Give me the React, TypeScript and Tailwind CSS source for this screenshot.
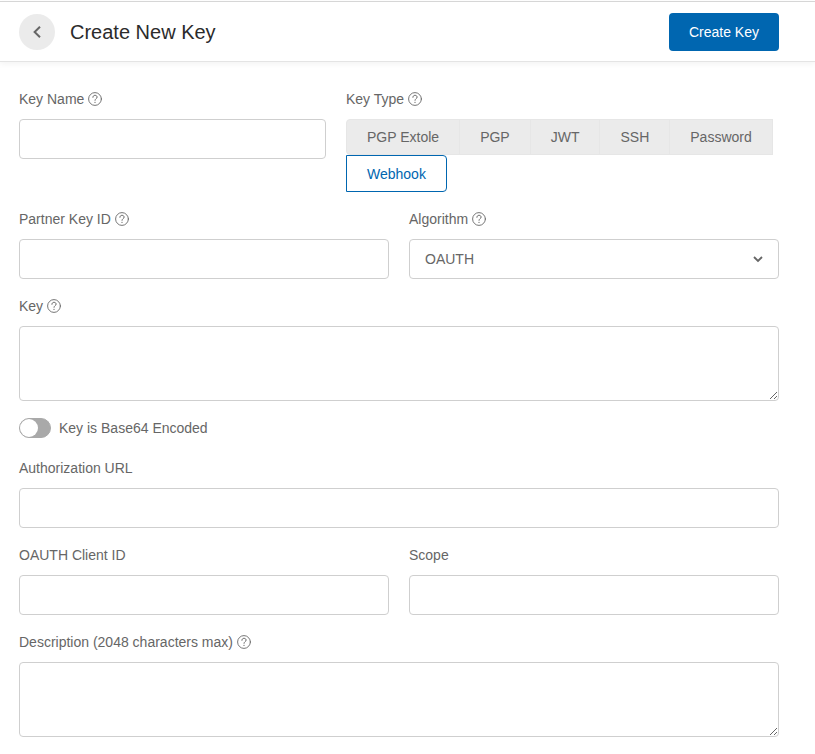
import { useState } from 'react'
import type { ReactNode } from 'react'

const keyTypes = ['PGP Extole', 'PGP', 'JWT', 'SSH', 'Password', 'Webhook']

const controlStyles =
  'block w-full rounded border border-[#cfcfcf] bg-white px-[15px] text-sm text-[#666] outline-none focus:border-[#0066b0]'

function HelpIcon() {
  return (
    <svg
      viewBox="0 0 14 14"
      className="h-3.5 w-3.5 shrink-0"
      fill="none"
      stroke="currentColor"
      strokeLinecap="round"
      aria-hidden="true"
    >
      <circle cx="7" cy="7" r="6.4" strokeWidth="0.9" />
      <path d="M4.9 5.3c0-1.2.9-2 2.1-2s2.1.8 2.1 1.8c0 1.5-2.1 1.6-2.1 3.2" strokeWidth="1" />
      <circle cx="7" cy="10.3" r="0.65" fill="currentColor" stroke="none" />
    </svg>
  )
}

type FieldProps = {
  id: string
  label: string
  help?: boolean
  children: ReactNode
}

function Field({ id, label, help, children }: FieldProps) {
  return (
    <div className="min-w-0">
      <label htmlFor={id} className="mb-2.5 flex items-center gap-1 leading-5">
        {label}
        {help && <HelpIcon />}
      </label>
      {children}
    </div>
  )
}

export default function App() {
  const [keyType, setKeyType] = useState('Webhook')
  const [encoded, setEncoded] = useState(false)

  return (
    <div className="bg-white pt-px font-['Liberation_Sans',Arial,sans-serif] text-sm text-[#666]">
      <header className="flex items-center border-t border-b border-t-[#d6d6d6] border-b-[#e4e4e4] pt-[11px] pr-9 pb-2.5 pl-[19px] shadow-[0_2px_6px_rgba(0,0,0,0.05)]">
        <button
          type="button"
          aria-label="Back"
          className="flex h-9 w-9 items-center justify-center rounded-full bg-[#ebebeb]"
        >
          <svg viewBox="0 0 12 14" className="h-3.5 w-3" fill="none" stroke="currentColor" strokeWidth="2" aria-hidden="true">
            <path d="M9 1.7 3.6 7 9 12.3" />
          </svg>
        </button>
        <h1 className="ml-[15px] text-xl leading-6 text-[#2b2b2b]">Create New Key</h1>
        <button
          type="submit"
          form="key-form"
          className="ml-auto h-[38px] rounded bg-[#0066b0] px-5 text-white"
        >
          Create Key
        </button>
      </header>

      <form
        id="key-form"
        onSubmit={(e) => e.preventDefault()}
        className="flex flex-col gap-[17px] pt-[27px] pr-9 pb-4 pl-[19px]"
      >
        <div className="grid grid-cols-[307fr_433fr] gap-5">
          <Field id="key-name" label="Key Name" help>
            <input id="key-name" type="text" className={`h-10 ${controlStyles}`} />
          </Field>

          <div className="min-w-0" role="group" aria-labelledby="key-type">
            <div id="key-type" className="mb-2.5 flex items-center gap-1 leading-5">
              Key Type
              <HelpIcon />
            </div>
            <div className="flex flex-wrap">
              {keyTypes.map((type) => (
                <button
                  key={type}
                  type="button"
                  aria-pressed={keyType === type}
                  onClick={() => setKeyType(type)}
                  className={`border px-5 first:rounded-l last:rounded-r ${
                    keyType === type
                      ? 'h-[37px] border-[#0066b0] bg-white text-[#0066b0]'
                      : 'h-9 border-[#e6e6e6] bg-[#ebebeb]'
                  } not-first:-ml-px nth-6:ml-0`}
                >
                  {type}
                </button>
              ))}
            </div>
          </div>
        </div>

        <div className="grid grid-cols-2 gap-5">
          <Field id="partner-key-id" label="Partner Key ID" help>
            <input id="partner-key-id" type="text" className={`h-10 ${controlStyles}`} />
          </Field>
          <Field id="algorithm" label="Algorithm" help>
            <div className="relative">
              <select id="algorithm" className={`h-10 appearance-none ${controlStyles}`}>
                <option>OAUTH</option>
              </select>
              <svg
                viewBox="0 0 10 8"
                className="pointer-events-none absolute top-4 right-4 h-2 w-2.5"
                fill="none"
                stroke="currentColor"
                strokeWidth="1.8"
                aria-hidden="true"
              >
                <path d="M1 2 5 6 9 2" />
              </svg>
            </div>
          </Field>
        </div>

        <Field id="key" label="Key" help>
          <textarea id="key" className={`h-[75px] resize ${controlStyles}`} />
        </Field>

        <label className="mb-[3px] flex items-center gap-2 leading-5">
          <input
            type="checkbox"
            role="switch"
            checked={encoded}
            onChange={(e) => setEncoded(e.target.checked)}
            className="h-5 w-8 appearance-none rounded-full border border-[#a9a9a9] bg-[#a9a9a9] before:block before:h-[18px] before:w-[18px] before:rounded-full before:bg-white checked:border-[#0066b0] checked:bg-[#0066b0] checked:before:ml-3"
          />
          Key is Base64 Encoded
        </label>

        <Field id="authorization-url" label="Authorization URL">
          <input id="authorization-url" type="text" className={`h-10 ${controlStyles}`} />
        </Field>

        <div className="grid grid-cols-2 gap-5">
          <Field id="client-id" label="OAUTH Client ID">
            <input id="client-id" type="text" className={`h-10 ${controlStyles}`} />
          </Field>
          <Field id="scope" label="Scope">
            <input id="scope" type="text" className={`h-10 ${controlStyles}`} />
          </Field>
        </div>

        <Field id="description" label="Description (2048 characters max)" help>
          <textarea id="description" className={`h-[75px] resize ${controlStyles}`} />
        </Field>
      </form>
    </div>
  )
}
